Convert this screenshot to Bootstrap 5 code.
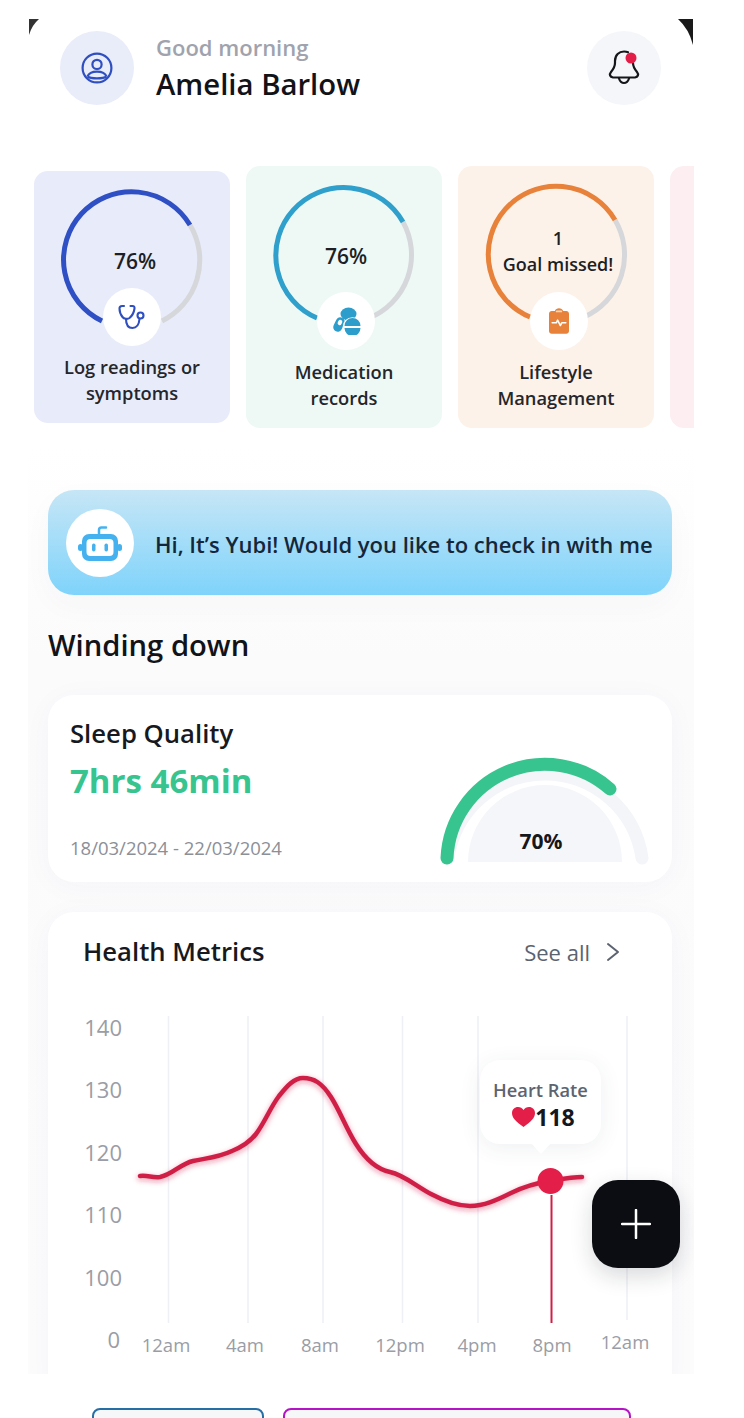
<!DOCTYPE html>
<html lang="en">

<head>
  <meta charset="UTF-8">
  <meta name="viewport" content="width=device-width, initial-scale=1.0">
  <title>Health Home</title>
  <link href="https://cdn.jsdelivr.net/npm/bootstrap@5.3.2/dist/css/bootstrap.min.css" rel="stylesheet">
  <style>
    html, body {
      height: 1418px;
      overflow: hidden;
    }

    body {
      background: #fff;
      font-family: "Open Sans", "Liberation Sans", sans-serif;
      color: #15171c;
    }

    .screen {
      width: 666px;
      height: 1356px;
      margin: 18px 0 0 28px;
      overflow: hidden;
      position: relative;
      background: linear-gradient(180deg, #fff 0, #fff 430px, #fbfbfc 640px, #fcfcfd 100%);
    }

    .corner-l { position: absolute; left: 0; top: 1px; }
    .corner-r { position: absolute; right: 0; top: 1px; }

    .top-bar { padding: 13px 33px 0 32px; }
    .avatar-btn {
      width: 74px;
      height: 74px;
      background: #e9ecf9;
    }
    .bell-btn {
      width: 74px;
      height: 74px;
      background: #f5f6f9;
    }
    .greet-box { margin-left: 22px; }
    .greet {
      font-size: 22px;
      line-height: 26px;
      font-weight: 600;
      color: #a0a3ad;
    }
    .user-name {
      font-size: 29.300px;
      line-height: 42px;
      font-weight: 600;
      color: #111318;
      margin-top: 3px;
      margin-bottom: -3px;
    }

    .tile-row {
      margin-top: 61px;
      padding-left: 6px;
      gap: 16px;
      height: 262px;
    }
    .tile {
      flex: 0 0 196px;
      border-radius: 14px;
      padding: 17px 0;
      text-align: center;
    }
    .tile-blue { background: #e8ebf9; height: 252px; }
    .tile-teal { background: #eef9f6; height: 262px; }
    .tile-orange { background: #fdf2ea; height: 262px; }
    .tile-pink { background: #fdeef2; height: 262px; }

    .ring-wrap {
      width: 144px;
      height: 144px;
      position: relative;
      margin: 0 auto;
    }
    .tile-teal .ring-wrap { left: -1px; }
    .tile-orange .ring-wrap { left: 1px; }
    .ring-text {
      position: absolute;
      inset: 0 0 -2px 6px;
      font-size: 21px;
      line-height: 26px;
      font-weight: 600;
      color: #1d1f24;
    }
    .ring-icon {
      position: absolute;
      left: 43px;
      width: 58px;
      height: 58px;
      background: #fff;
    }
    .tile-blue .ring-icon { top: 100px; }
    .tile-teal .ring-icon { top: 109px; left: 46px; }
    .tile-orange .ring-icon { top: 109px; left: 45px; }
    .tile-label {
      font-size: 18.300px;
      line-height: 26px;
      font-weight: 600;
      color: #24262b;
      margin-top: 32px;
    }
    .tile-blue .tile-label { margin-top: 22px; }
    .ring-text.goal-text {
      font-size: 18px;
      inset: 0 0 8px 2px;
    }

    .main-col { margin: 62px 22px 0 20px; }

    .yubi-bar {
      height: 105px;
      padding-left: 18px;
      border-radius: 26px;
      background: linear-gradient(180deg, #c6e6f6 0, #7fd3fb 100%);
      box-shadow: 0 10px 30px rgba(60, 70, 110, .03);
    }
    .yubi-face {
      width: 68px;
      height: 68px;
      background: #fff;
    }
    .yubi-text {
      font-size: 22px;
      font-weight: 600;
      color: #14273a;
      margin: 4px 0 0 21px;
      white-space: nowrap;
    }

    .section-title {
      font-size: 29.200px;
      line-height: 38px;
      font-weight: 600;
      margin: 31px 0 31px;
      color: #111318;
    }

    .soft-panel {
      background: #fff;
      border-radius: 26px;
      box-shadow: 0 4px 30px rgba(60, 70, 110, .035);
    }
    .sleep-panel {
      height: 187px;
      padding: 21px 22px 0;
      position: relative;
    }
    .panel-title {
      font-size: 25.700px;
      line-height: 36px;
      font-weight: 600;
      color: #17191e;
    }
    .sleep-hours {
      font-size: 33px;
      line-height: 44px;
      font-weight: 700;
      color: #38c48f;
      margin-top: 7px;
    }
    .sleep-date {
      font-size: 18.500px;
      line-height: 24px;
      color: #8b8f98;
      margin-top: 33px;
    }
    .gauge {
      position: absolute;
      left: 390px;
      top: 58px;
    }

    .metrics-panel {
      margin-top: 30px;
      height: 480px;
      position: relative;
      border-radius: 26px 26px 0 0;
    }
    .metrics-head {
      height: 88px;
      padding: 22px 52px 0 35px;
    }
    .see-all {
      font-size: 22px;
      line-height: 36px;
      color: #5c6370;
    }
    .chart-wrap { position: relative; }
    .chart-wrap svg { display: block; }
    .chart-y { font-size: 22px; fill: #9a9da5; }
    .chart-x { font-size: 18.500px; fill: #9a9da5; }

    .hr-tip {
      position: absolute;
      left: 432px;
      top: 60px;
      width: 121px;
      height: 84px;
      background: #fff;
      border-radius: 20px;
      box-shadow: 0 4px 22px rgba(50, 60, 90, .08);
      text-align: center;
      padding-top: 18px;
    }
    .hr-tip::after {
      content: "";
      position: absolute;
      left: 50%;
      bottom: -10px;
      margin-left: -10px;
      border-left: 10px solid transparent;
      border-right: 10px solid transparent;
      border-top: 11px solid #fff;
    }
    .tip-label {
      font-size: 18.300px;
      line-height: 24px;
      font-weight: 600;
      color: #5d6470;
    }
    .tip-value {
      font-size: 23px;
      line-height: 30px;
      font-weight: 700;
      color: #15171c;
      padding-left: 6px;
    }

    .fab-add {
      position: absolute;
      left: 544px;
      top: 268px;
      width: 88px;
      height: 88px;
      background: #0b0d12;
      border-radius: 26px;
      box-shadow: 0 8px 22px rgba(20, 25, 40, .16);
    }

    .bottom-strip {
      padding-left: 92px;
      margin-top: 34px;
      gap: 19px;
    }
    .stub-a, .stub-b {
      height: 40px;
      background: #f6f7f9;
      border-radius: 8px 8px 0 0;
    }
    .stub-a { width: 172px; border: 2px solid #266ea6; }
    .stub-b { width: 348px; border: 2px solid #b414c6; }
  </style>
</head>

<body>
  <div class="screen">
    <svg class="corner-l" width="12" height="17" viewBox="0 0 12 17"><path d="M1 0H11Q4 6 1 16Z" fill="#333"/></svg>
    <svg class="corner-r" width="16" height="27" viewBox="0 0 16 27"><path d="M0 0H15V26Q11 10 0 0Z" fill="#1a1a1a"/></svg>

    <!-- header -->
    <div class="top-bar d-flex align-items-center justify-content-between">
      <div class="d-flex align-items-center">
        <div class="avatar-btn rounded-circle d-flex align-items-center justify-content-center">
          <svg width="32" height="32" viewBox="0 0 32 32" fill="none" stroke="#2f4fc0" stroke-width="2.200">
            <circle cx="16" cy="16" r="14.400"/>
            <circle cx="16" cy="12.400" r="4.600"/>
            <path d="M6.500 24.500C8 20.600 11.500 19.600 16 19.600s8 1 9.500 4.900"/>
            <path d="M6.500 24.500C10 27 22 27 25.500 24.500"/>
          </svg>
        </div>
        <div class="greet-box">
          <div class="greet">Good morning</div>
          <div class="user-name">Amelia Barlow</div>
        </div>
      </div>
      <div class="bell-btn rounded-circle d-flex align-items-center justify-content-center">
        <svg width="36" height="38" viewBox="0 0 36 38" fill="none" stroke="#14161b" stroke-width="2.200" stroke-linecap="round" stroke-linejoin="round">
          <path d="M27 14c0 4 1.500 6 4 9 2 2.500 1 5-2 5.500H7c-3-.5-4-3-2-5.500 2.500-3 4-5 4-9v-2C9 6 13 2.500 18 2.500c1.500 0 3 .3 4 .8"/>
          <path d="M13 29.500c1 3 2.500 4.500 5 4.500s4-1.500 5-4.500"/>
          <circle cx="25" cy="9" r="5.500" fill="#e21d48" stroke="none"/>
        </svg>
      </div>
    </div>

    <!-- progress tiles -->
    <div class="tile-row d-flex align-items-center">
      <div class="tile tile-blue">
        <div class="ring-wrap">
          <svg width="144" height="144" viewBox="-72 -72 144 144" fill="none" stroke-width="5">
            <path d="M58 -35A68 68 0 0 1 30 61" stroke="#d6d7da"/>
            <path d="M-30 61A68 68 0 1 1 58 -35" stroke="#2f4fc4"/>
          </svg>
          <div class="ring-text d-flex align-items-center justify-content-center">76%</div>
          <div class="ring-icon rounded-circle d-flex align-items-center justify-content-center">
            <svg width="28" height="26" viewBox="0 0 28 26" fill="none" stroke="#2f4fc0" stroke-width="2.100" stroke-linecap="round" stroke-linejoin="round">
              <path d="M6 2H4C2.500 2 1.500 3 1.500 4.500c0 2.500 1 6 3 8.500 1.500 2 5 2.500 7 1 3-2.500 4.500-6 5-9.500.2-1.500-.5-2.500-2-2.500h-2"/>
              <path d="M8 15c0 5 2 9 6.500 9s6.500-3.500 7-9"/>
              <circle cx="22.500" cy="11.500" r="3"/>
            </svg>
          </div>
        </div>
        <div class="tile-label">Log readings or<br>symptoms</div>
      </div>

      <div class="tile tile-teal">
        <div class="ring-wrap">
          <svg width="144" height="144" viewBox="-72 -72 144 144" fill="none" stroke-width="5">
            <path d="M60 -33A68 68 0 0 1 26 63" stroke="#d6d7da"/>
            <path d="M-26 63A68 68 0 1 1 60 -33" stroke="#2f9fcb"/>
          </svg>
          <div class="ring-text d-flex align-items-center justify-content-center">76%</div>
          <div class="ring-icon rounded-circle d-flex align-items-center justify-content-center">
            <svg width="30" height="28" viewBox="0 0 30 28">
              <ellipse cx="17.500" cy="7" rx="8" ry="6.500" fill="#2d9ecb"/>
              <rect x="3.500" y="10" width="9" height="15" rx="4.500" transform="rotate(25 8 17.500)" fill="#2d9ecb"/>
              <rect x="6" y="12.500" width="4" height="5.500" rx="2" transform="rotate(25 8 17.500)" fill="#fff"/>
              <circle cx="21.500" cy="20" r="9.800" fill="#fff"/>
              <path d="M13.500 19a8 8 0 0 1 16 0ZM13.500 21h16a8 8 0 0 1-16 0Z" fill="#2d9ecb"/>
            </svg>
          </div>
        </div>
        <div class="tile-label">Medication<br>records</div>
      </div>

      <div class="tile tile-orange">
        <div class="ring-wrap">
          <svg width="144" height="144" viewBox="-72 -72 144 144" fill="none" stroke-width="5">
            <path d="M58 -35A68 68 0 0 1 27 62" stroke="#d6d7da"/>
            <path d="M-27 62A68 68 0 1 1 58 -35" stroke="#e8823a"/>
          </svg>
          <div class="ring-text goal-text d-flex align-items-center justify-content-center text-center">1<br>Goal missed!</div>
          <div class="ring-icon rounded-circle d-flex align-items-center justify-content-center">
            <svg width="20" height="26" viewBox="0 0 22 28">
              <path d="M3 3h3.500C7 1 9 0 11 0s4 1 4.500 3H19c1.700 0 3 1.300 3 3v19c0 1.700-1.300 3-3 3H3c-1.700 0-3-1.300-3-3V6c0-1.700 1.300-3 3-3Z" fill="#e8823a"/>
              <rect x="7.500" y="2.500" width="7" height="2" rx="1" fill="#fff" opacity=".7"/>
              <path d="M3.500 16H8l1.500-3 3 6 1.500-3h4.500" fill="none" stroke="#fff" stroke-width="1.700" stroke-linecap="round" stroke-linejoin="round"/>
            </svg>
          </div>
        </div>
        <div class="tile-label">Lifestyle<br>Management</div>
      </div>

      <div class="tile tile-pink"></div>
    </div>

    <div class="main-col">
      <!-- assistant -->
      <div class="yubi-bar d-flex align-items-center">
        <div class="yubi-face rounded-circle d-flex align-items-center justify-content-center">
          <svg width="44" height="38" viewBox="0 0 44 38">
            <path d="M21 11V6c0-1.500 .8-2.500 2.500-2.500H28" fill="none" stroke="#45b2ef" stroke-width="2.500" stroke-linecap="round"/>
            <rect x="0" y="20" width="5" height="7" rx="2.500" fill="#45b2ef"/>
            <rect x="39" y="20" width="5" height="7" rx="2.500" fill="#45b2ef"/>
            <rect x="4" y="10" width="36" height="27" rx="7" fill="#45b2ef"/>
            <rect x="8.500" y="15" width="27" height="17" rx="4" fill="#fff"/>
            <rect x="14" y="19.500" width="3.500" height="8" rx="1.700" fill="#45b2ef"/>
            <rect x="26.500" y="19.500" width="3.500" height="8" rx="1.700" fill="#45b2ef"/>
          </svg>
        </div>
        <div class="yubi-text">Hi, It’s Yubi! Would you like to check in with me</div>
      </div>

      <div class="section-title">Winding down</div>

      <!-- sleep -->
      <div class="soft-panel sleep-panel">
        <div class="panel-title">Sleep Quality</div>
        <div class="sleep-hours">7hrs 46min</div>
        <div class="sleep-date">18/03/2024 - 22/03/2024</div>
        <svg class="gauge" width="220" height="115" viewBox="0 0 220 115" fill="none">
          <path d="M30 109A77 77 0 0 1 184 109Z" fill="#f5f6f9"/>
          <path d="M10 105A98 98 0 0 1 204 105" stroke="#f4f5f8" stroke-width="13" stroke-linecap="round"/>
          <path d="M9 105A98 98 0 0 1 172 36" stroke="#38c48f" stroke-width="13" stroke-linecap="round"/>
          <text x="103" y="96" text-anchor="middle" font-size="21" font-weight="700" fill="#15171c">70%</text>
        </svg>
      </div>

      <!-- metrics -->
      <div class="soft-panel metrics-panel">
        <div class="metrics-head d-flex justify-content-between align-items-start">
          <div class="panel-title">Health Metrics</div>
          <div class="see-all d-flex align-items-center gap-3">
            <span>See all</span>
            <svg width="14" height="20" viewBox="0 0 14 20" fill="none" stroke="#5c6370" stroke-width="2" stroke-linecap="round" stroke-linejoin="round"><path d="M2 2l10 8-10 8"/></svg>
          </div>
        </div>
        <div class="chart-wrap">
          <svg width="624" height="374" viewBox="48 1000 624 374">
            <defs>
              <filter id="lineGlow" x="-5%" y="-20%" width="110%" height="140%"><feGaussianBlur stdDeviation="2.500"/></filter>
              <path id="hrCurve" d="M140 1176C148 1175 152 1178 160 1177C172 1175 180 1164 193 1161C206 1158 217 1158 232 1151C242 1147 249 1143 256 1134C265 1122 270 1108 279 1096C287 1086 294 1078 303 1078C314 1078 322 1083 331 1097C340 1111 346 1128 356 1144C366 1160 376 1169 390 1172C404 1175 416 1186 431 1194C446 1202 458 1206 470 1206C484 1206 497 1200 511 1193C525 1186 537 1183 550 1181C562 1179 572 1177 582 1177" fill="none" stroke-linecap="round"/>
            </defs>
            <g stroke="#eef0f5" stroke-width="1.500">
              <path d="M168.500 1016V1323M248 1016V1323M323 1016V1323M402.500 1016V1323M478 1016V1323M627 1016V1320"/>
            </g>
            <g class="chart-y" text-anchor="end">
              <text x="122" y="1036">140</text>
              <text x="122" y="1098">130</text>
              <text x="122" y="1161">120</text>
              <text x="122" y="1223">110</text>
              <text x="122" y="1286">100</text>
              <text x="120" y="1348">0</text>
            </g>
            <g class="chart-x" text-anchor="middle">
              <text x="166" y="1352">12am</text>
              <text x="245" y="1352">4am</text>
              <text x="320" y="1352">8am</text>
              <text x="400" y="1352">12pm</text>
              <text x="477" y="1352">4pm</text>
              <text x="552" y="1352">8pm</text>
              <text x="625" y="1349">12am</text>
            </g>
            <circle cx="550.500" cy="1182" r="16" fill="#fff"/>
            <use href="#hrCurve" stroke="#d01f47" stroke-opacity=".35" stroke-width="6" filter="url(#lineGlow)" transform="translate(0 2)"/>
            <use href="#hrCurve" stroke="#d01f47" stroke-width="4.500"/>
            <path d="M551.500 1195V1323" stroke="#d01f47" stroke-width="2"/>
            <circle cx="550.500" cy="1181" r="13" fill="#e31e48"/>
          </svg>
          <div class="hr-tip">
            <div class="tip-label">Heart Rate</div>
            <div class="tip-value d-flex align-items-center justify-content-center">
              <svg width="23" height="20" viewBox="0 0 23 20"><path d="M11.500 20C4 14.500 0 11 0 6 0 2.500 2.700 0 6 0c2.300 0 4.300 1 5.500 3C12.700 1 14.700 0 17 0c3.300 0 6 2.500 6 6 0 5-4 8.500-11.500 14Z" fill="#e31e48"/></svg>
              <span>118</span>
            </div>
          </div>
        </div>
        <div class="fab-add d-flex align-items-center justify-content-center">
          <svg width="30" height="30" viewBox="0 0 30 30" stroke="#fff" stroke-width="2.500" stroke-linecap="round"><path d="M15 1V29M1 15H29"/></svg>
        </div>
      </div>
    </div>
  </div>

  <div class="bottom-strip d-flex">
    <div class="stub-a"></div>
    <div class="stub-b"></div>
  </div>

  <script src="https://cdn.jsdelivr.net/npm/bootstrap@5.3.2/dist/js/bootstrap.bundle.min.js"></script>
</body>

</html>
